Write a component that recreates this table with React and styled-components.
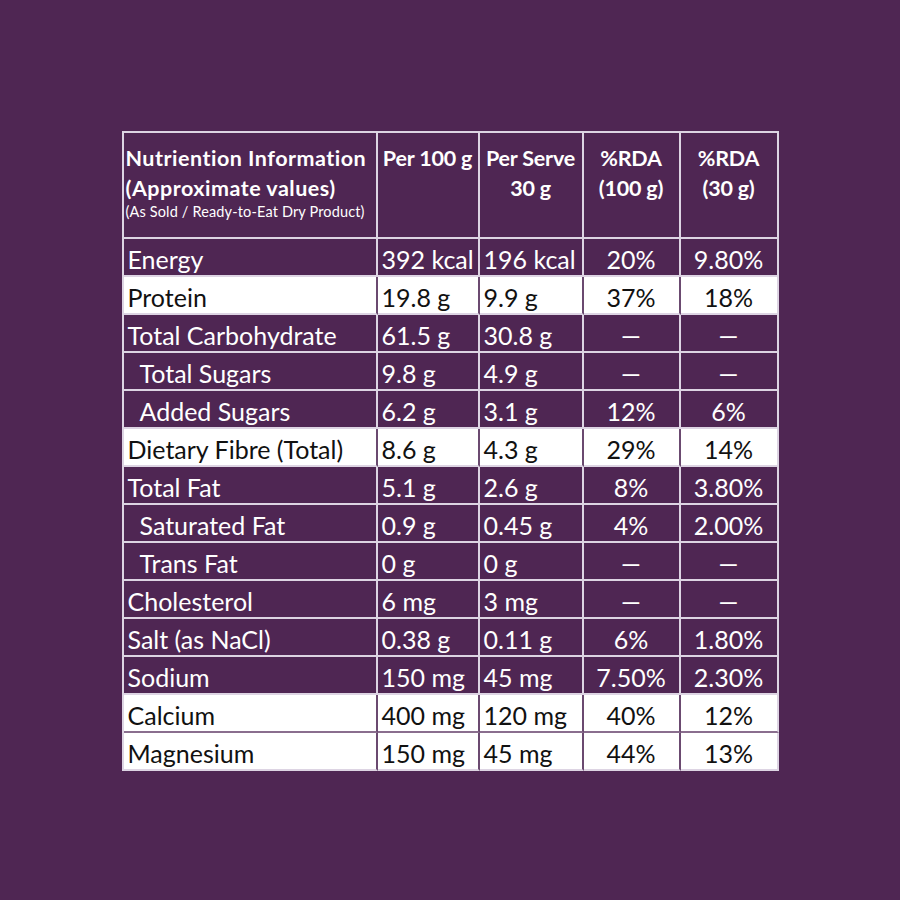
import React from 'react';
import styled, { createGlobalStyle } from 'styled-components';

const PURPLE = '#4f2653';
const LINE = '#ddd4e3';

const GlobalStyle = createGlobalStyle`
  html, body {
    margin: 0;
    padding: 0;
    background: ${PURPLE};
  }
  body {
    font-family: Lato, "Open Sans", "Liberation Sans", sans-serif;
  }
`;

const rows = [
  { name: 'Energy', a: '392 kcal', b: '196 kcal', c: '20%', d: '9.80%' },
  { name: 'Protein', a: '19.8 g', b: '9.9 g', c: '37%', d: '18%', light: true },
  { name: 'Total Carbohydrate', a: '61.5 g', b: '30.8 g', c: '—', d: '—' },
  { name: 'Total Sugars', a: '9.8 g', b: '4.9 g', c: '—', d: '—', indent: true },
  { name: 'Added Sugars', a: '6.2 g', b: '3.1 g', c: '12%', d: '6%', indent: true },
  { name: 'Dietary Fibre (Total)', a: '8.6 g', b: '4.3 g', c: '29%', d: '14%', light: true },
  { name: 'Total Fat', a: '5.1 g', b: '2.6 g', c: '8%', d: '3.80%' },
  { name: 'Saturated Fat', a: '0.9 g', b: '0.45 g', c: '4%', d: '2.00%', indent: true },
  { name: 'Trans Fat', a: '0 g', b: '0 g', c: '—', d: '—', indent: true },
  { name: 'Cholesterol', a: '6 mg', b: '3 mg', c: '—', d: '—' },
  { name: 'Salt (as NaCl)', a: '0.38 g', b: '0.11 g', c: '6%', d: '1.80%' },
  { name: 'Sodium', a: '150 mg', b: '45 mg', c: '7.50%', d: '2.30%' },
  { name: 'Calcium', a: '400 mg', b: '120 mg', c: '40%', d: '12%', light: true },
  { name: 'Magnesium', a: '150 mg', b: '45 mg', c: '44%', d: '13%', light: true },
];

const Page = styled.div`
  width: 900px;
  height: 900px;
  display: flex;
  align-items: center;
  justify-content: center;
  background: ${PURPLE};
`;

const Table = styled.table`
  border-collapse: separate;
  border-spacing: 0;
  border-top: 2px solid ${LINE};
  border-left: 2px solid ${LINE};
  table-layout: fixed;
  width: 655px;
  margin-top: 2px;
`;

const Head = styled.th`
  height: 106px;
  padding: 10px 2px 0;
  vertical-align: top;
  text-align: ${(p) => (p.left ? 'left' : 'center')};
  color: #fff;
  font-weight: 700;
  font-size: 21.5px;
  line-height: 30px;
  letter-spacing: ${(p) => (p.left ? '0.5px' : '-0.2px')};
  border-right: 2px solid ${LINE};
  border-bottom: 2px solid ${LINE};
  white-space: nowrap;
  box-sizing: border-box;
`;

const Small = styled.div`
  font-size: 14.5px;
  font-weight: 400;
  line-height: 18px;
  letter-spacing: 0.15px;
`;

const Cell = styled.td`
  height: 36px;
  padding: 4px 0 0 ${(p) => (p.indent ? '16px' : '4px')};
  text-align: ${(p) => (p.center ? 'center' : 'left')};
  ${(p) => p.center && 'padding-left: 0;'}
  font-size: 25px;
  line-height: 32px;
  white-space: nowrap;
  color: ${(p) => (p.light ? '#111' : '#fff')};
  background: ${(p) => (p.light ? '#fff' : PURPLE)};
  border-right: 2px solid ${(p) => (p.light && !p.last ? '#6b4a70' : LINE)};
  border-bottom: 2px solid ${(p) => (p.light && p.nextLight ? '#8a6e8e' : LINE)};
  box-sizing: border-box;
`;

export default function App() {
  return (
    <Page>
      <GlobalStyle />
      <Table>
        <colgroup>
          <col style={{ width: 254 }} />
          <col style={{ width: 102 }} />
          <col style={{ width: 104 }} />
          <col style={{ width: 97 }} />
          <col style={{ width: 98 }} />
        </colgroup>
        <thead>
          <tr>
            <Head left>
              Nutriention Information
              <br />
              (Approximate values)
              <Small>(As Sold / Ready-to-Eat Dry Product)</Small>
            </Head>
            <Head>Per 100 g</Head>
            <Head>
              Per Serve
              <br />
              30 g
            </Head>
            <Head>
              %RDA
              <br />
              (100 g)
            </Head>
            <Head>
              %RDA
              <br />
              (30 g)
            </Head>
          </tr>
        </thead>
        <tbody>
          {rows.map((r, i) => {
            const nextLight = rows[i + 1] && rows[i + 1].light;
            const common = { light: r.light, nextLight };
            return (
              <tr key={r.name}>
                <Cell {...common} indent={r.indent}>{r.name}</Cell>
                <Cell {...common}>{r.a}</Cell>
                <Cell {...common}>{r.b}</Cell>
                <Cell {...common} center>{r.c}</Cell>
                <Cell {...common} center last>{r.d}</Cell>
              </tr>
            );
          })}
        </tbody>
      </Table>
    </Page>
  );
}
